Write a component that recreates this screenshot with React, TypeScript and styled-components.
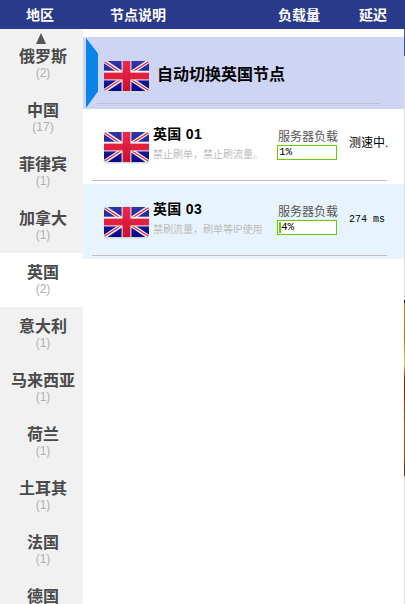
import React from 'react';
import styled, { createGlobalStyle } from 'styled-components';

const GlobalStyle = createGlobalStyle`
  html, body { margin: 0; padding: 0; background: #fff; overflow: hidden; }
  body { font-family: "Liberation Sans", "Noto Sans CJK SC", sans-serif; }
`;

const Page = styled.div`
  width: 405px;
  height: 604px;
  overflow: hidden;
  display: flex;
  flex-direction: column;
`;

const Header = styled.div`
  height: 29px;
  flex: none;
  background: #2a3a8a;
  color: #fff;
  font-size: 14px;
  font-weight: 700;
  display: grid;
  grid-template-columns: 83px 195px 1fr;
  align-items: center;
  line-height: 26px;
`;

const HeaderCell = styled.div<{ $pad: number }>`
  padding-left: ${(p) => p.$pad}px;
`;

const HeaderEnd = styled.div`
  display: flex;
  gap: 39px;
`;

const Body = styled.div`
  flex: 1;
  display: flex;
  min-height: 0;
`;

const Sidebar = styled.div`
  width: 83px;
  flex: none;
  background: #f1f1f1;
  position: relative;
  padding-top: 8px;
  overflow: hidden;
`;

const UpArrow = styled.div`
  position: absolute;
  left: 36px;
  top: 4px;
  width: 0;
  height: 0;
  border-left: 5px solid transparent;
  border-right: 5px solid transparent;
  border-bottom: 11px solid #555;
`;

const Region = styled.div<{ $active?: boolean }>`
  height: 54px;
  box-sizing: border-box;
  padding: 9px 0 0 3px;
  text-align: center;
  background: ${(p) => (p.$active ? '#fff' : 'transparent')};
`;

const RegionName = styled.div`
  font-size: 16px;
  font-weight: 700;
  line-height: 22px;
  color: #4a4a4a;
  white-space: nowrap;
`;

const RegionCount = styled.div`
  font-size: 12px;
  line-height: 10px;
  color: #b0b0b0;
`;

const Main = styled.div`
  flex: 1;
  display: flex;
  min-width: 0;
`;

const Content = styled.div`
  flex: 1;
  min-width: 0;
  padding-top: 8px;
`;

// one pixel of whatever page lies behind this panel
const Rail = styled.div`
  width: 1px;
  flex: none;
  background: linear-gradient(
    #3f51b5 0 27px,
    #dedede 27px 271px,
    #201008 271px 273px,
    #c09028 275px,
    #a87c20 310px,
    #e0d060 335px,
    #a81000 350px,
    #a05818 400px,
    #b04818 425px,
    #6a3a10 440px 447px,
    #dedede 447px
  );
`;

const Banner = styled.div`
  height: 72px;
  background: #ced4f4;
  position: relative;
  display: flex;
  align-items: center;
  padding-left: 20px;
  gap: 9px;
`;

const Marker = styled.div`
  position: absolute;
  left: 3px;
  top: 1px;
  width: 12px;
  height: 70px;
  background: #0a84e8;
  clip-path: polygon(0 0, 100% 22%, 100% 76%, 0 100%);
`;

const BannerTitle = styled.div`
  font-size: 16px;
  font-weight: 700;
  color: #000;
  margin-left: -1px;
`;

const Rule = styled.div<{ $left: number; $right: number; $bottom: number }>`
  position: absolute;
  left: ${(p) => p.$left}px;
  right: ${(p) => p.$right}px;
  bottom: ${(p) => p.$bottom}px;
  height: 1px;
  background: #c0c0c0;
`;

const Row = styled.div<{ $selected?: boolean }>`
  height: 75px;
  position: relative;
  background: ${(p) => (p.$selected ? '#e8f4fd' : '#fff')};
  display: flex;
  align-items: flex-start;
  padding-left: 20px;
  box-sizing: border-box;
`;

const FlagSvg = styled.svg<{ $top: number }>`
  flex: none;
  margin: ${(p) => p.$top}px 0 0 1px;
`;

const NodeText = styled.div`
  margin-left: 4px;
  width: 124px;
  padding-top: 16px;
`;

const NodeName = styled.div`
  font-size: 14px;
  font-weight: 700;
  line-height: 18px;
  letter-spacing: 0.3px;
  color: #000;
`;

const NodeNote = styled.div`
  font-size: 10px;
  line-height: 14px;
  margin-top: 5px;
  color: #bcbcbc;
  white-space: nowrap;
`;

const LoadBox = styled.div`
  width: 60px;
  flex: none;
  padding-top: 20px;
`;

const LoadLabel = styled.div`
  font-size: 12px;
  line-height: 16px;
  color: #555;
  white-space: nowrap;
  margin-left: 1px;
`;

const LoadBar = styled.div`
  height: 15px;
  box-sizing: border-box;
  border: 1px solid #66cc00;
  background: #fff;
  padding: 1px;
  display: flex;
`;

const LoadFill = styled.div`
  background: #66cc00;
  flex: none;
`;

const LoadValue = styled.div`
  font-family: "Liberation Mono", monospace;
  font-size: 11px;
  line-height: 11px;
  color: #000;
`;

const Delay = styled.div<{ $mono?: boolean }>`
  margin-left: 12px;
  padding-top: ${(p) => (p.$mono ? 28 : 26)}px;
  line-height: 16px;
  font-size: ${(p) => (p.$mono ? 10 : 12)}px;
  font-family: ${(p) => (p.$mono ? '"Liberation Mono", monospace' : 'inherit')};
  color: #000;
  white-space: nowrap;
`;

const Flag = ({ top }: { top: number }) => (
  <FlagSvg $top={top} width="45" height="32" viewBox="0 0 46 33" preserveAspectRatio="none">
    <defs>
      <clipPath id="flagClip">
        <rect x="0" y="0" width="46" height="31" rx="3" />
      </clipPath>
      <linearGradient id="flagBlue" x1="0" y1="0" x2="0" y2="1">
        <stop offset="0" stopColor="#3036a8" />
        <stop offset="1" stopColor="#06088a" />
      </linearGradient>
      <linearGradient id="flagRed" x1="0" y1="0" x2="0" y2="1">
        <stop offset="0" stopColor="#ee2a4c" />
        <stop offset="1" stopColor="#c8102e" />
      </linearGradient>
    </defs>
    <rect x="0.5" y="1.5" width="45" height="31" rx="3" fill="#d4d6de" />
    <g clipPath="url(#flagClip)">
      <rect width="46" height="31" fill="url(#flagBlue)" />
      <path d="M0 0 46 31M46 0 0 31" stroke="#f4f4f8" strokeWidth="4" />
      <path d="M1 1 19 13M45 1 27 12.500M1 30 19 18M45 30 27 18.500" stroke="#e8283c" strokeWidth="1.3" />
      <rect x="0" y="10" width="46" height="10" fill="#f4f4f8" />
      <rect x="18" y="0" width="10" height="31" fill="#f4f4f8" />
      <rect x="0" y="12" width="46" height="7" fill="#e0203e" />
      <rect x="19" y="0" width="8" height="31" fill="url(#flagRed)" />
    </g>
  </FlagSvg>
);

const regions = [
  ['俄罗斯', 2],
  ['中国', 17],
  ['菲律宾', 1],
  ['加拿大', 1],
  ['英国', 2],
  ['意大利', 1],
  ['马来西亚', 1],
  ['荷兰', 1],
  ['土耳其', 1],
  ['法国', 1],
  ['德国', 1],
] as const;

const nodes = [
  { name: '英国 01', note: '禁止刷单\uFF0C禁止刷流量。', load: 1, delay: '测速中.' },
  { name: '英国 03', note: '禁刷流量\uFF0C刷单等IP使用', load: 4, delay: '274 ms', selected: true },
];

const App = () => (
  <Page>
    <GlobalStyle />
    <Header>
      <HeaderCell $pad={26}>地区</HeaderCell>
      <HeaderCell $pad={27}>节点说明</HeaderCell>
      <HeaderEnd>
        <span>负载量</span>
        <span>延迟</span>
      </HeaderEnd>
    </Header>
    <Body>
      <Sidebar>
        <UpArrow />
        {regions.map(([name, count]) => (
          <Region key={name} $active={name === '英国'}>
            <RegionName>{name}</RegionName>
            <RegionCount>({count})</RegionCount>
          </Region>
        ))}
      </Sidebar>
      <Main>
        <Content>
          <Banner>
            <Marker />
            <Flag top={7} />
            <BannerTitle>自动切换英国节点</BannerTitle>
            <Rule $left={14} $right={24} $bottom={5} />
          </Banner>
          {nodes.map((n) => (
            <Row key={n.name} $selected={n.selected}>
              <Flag top={23} />
              <NodeText>
                <NodeName>{n.name}</NodeName>
                <NodeNote>{n.note}</NodeNote>
              </NodeText>
              <LoadBox>
                <LoadLabel>服务器负载</LoadLabel>
                <LoadBar>
                  <LoadFill style={{ width: Math.floor((56 * n.load) / 100) }} />
                  <LoadValue>{n.load}%</LoadValue>
                </LoadBar>
              </LoadBox>
              <Delay $mono={n.selected}>{n.delay}</Delay>
              <Rule $left={9} $right={17} $bottom={3} />
            </Row>
          ))}
        </Content>
        <Rail />
      </Main>
    </Body>
  </Page>
);

export default App;
